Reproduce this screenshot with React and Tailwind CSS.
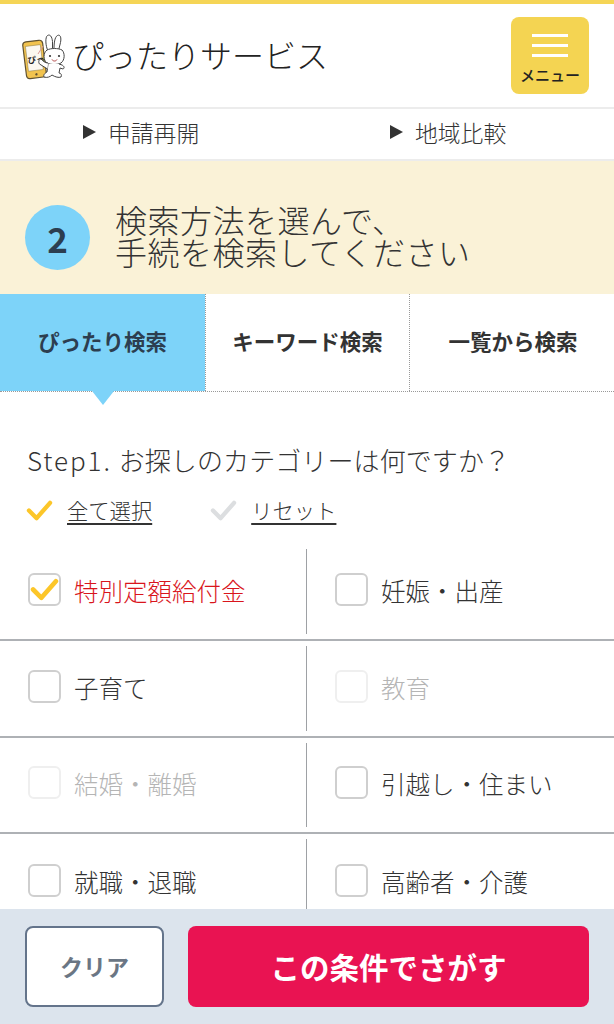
import React from 'react';

const font = { fontFamily: '"Noto Sans CJK JP", "Noto Sans", sans-serif' };

function Logo() {
  return (
    <svg width="44" height="48" viewBox="0 0 44 48" className="shrink-0">
      <g transform="rotate(-7 12 27)">
        <rect x="2.500" y="9" width="20" height="37" rx="3.500" fill="#f2c34e" stroke="#5f5130" strokeWidth="1.200" />
        <rect x="5" y="13.500" width="15" height="25" fill="#fbf8f0" stroke="#8a7a4a" strokeWidth="0.500" />
        <circle cx="12.500" cy="42.500" r="1.200" fill="#5f5130" />
      </g>
      <text x="5.500" y="31" fontSize="8.500" fontWeight="700" fill="#222222" transform="rotate(-7 12 27)">ぴっ</text>
      <path d="M16 22l5-8" stroke="#d99a9a" strokeWidth="1" />
      <path d="M26 19c-2.500-5-3-14-.5-15.500s4.500 1 5 6v8M32 17c0-5 .5-12 3.500-13.500s4 2.500 3 7l-2 8" fill="#fff" stroke="#444" strokeWidth="1" />
      <path d="M25 18c4-2 11-2 15 0 3 3 3 10-1 13-4 2-10 2-14 0-4-3-4-10 0-13z" fill="#fff" stroke="#444" strokeWidth="1" />
      <circle cx="28" cy="24" r="1.100" fill="#333" />
      <circle cx="37" cy="24" r="1.100" fill="#333" />
      <path d="M30 27.500c1 2 4 2 5 0" fill="none" stroke="#a33" strokeWidth="0.900" />
      <path d="M26 32l-1 8c-2 1-4 3-3 5 3 1 6 0 8-2 3 2 7 3 9 2 1-2 0-4-2-4l1-5 3 1c2-1 1-3-1-4l-3-1" fill="#fff" stroke="#444" strokeWidth="1" />
      <path d="M26 31c-3 0-5-2-7-4-2 0-3 3-1.500 5l8 5" fill="#fff" stroke="#444" strokeWidth="1" />
    </svg>
  );
}

function CheckMark({ color, className }) {
  return (
    <svg viewBox="0 0 28 24" className={className}>
      <path d="M3 12l8 8L25 4" fill="none" stroke={color} strokeWidth="4.500" strokeLinecap="round" strokeLinejoin="round" />
    </svg>
  );
}

function Cell({ label, checked, disabled, right }) {
  return (
    <div className={`h-full flex items-center ${right ? 'pl-[28px]' : 'pl-[28px]'}`}>
      <span className={`w-[33px] h-[33px] -mt-[5px] rounded-[6px] bg-white border-2 shrink-0 flex items-center justify-center ${disabled ? 'border-[#efefef]' : 'border-[#cfcfcf]'}`}>
        {checked && <CheckMark color="#fcc629" className="w-[29px] h-[25px] shrink-0" />}
      </span>
      <span className={`ml-[13px] -mt-[1px] text-[24.500px] leading-none font-light ${checked ? 'text-[#d9151c]' : disabled ? 'text-[#b5b5b5]' : 'text-[#333333]'}`}>{label}</span>
    </div>
  );
}

const rows = [
  [{ label: '特別定額給付金', checked: true }, { label: '妊娠・出産' }],
  [{ label: '子育て' }, { label: '教育', disabled: true }],
  [{ label: '結婚・離婚', disabled: true }, { label: '引越し・住まい' }],
  [{ label: '就職・退職' }, { label: '高齢者・介護' }],
];

export default function App() {
  return (
    <div style={font} className="relative w-[614px] h-[1024px] overflow-hidden bg-white text-[#333333]">
      <div className="h-[4px] bg-[#f5d556]" />

      <header className="h-[103px] flex items-center justify-between pl-[22px] pr-[25px]">
        <div className="flex items-center gap-[6px]">
          <Logo />
          <span className="-mt-[3px] text-[32px] leading-none font-light text-[#222222]">ぴったりサービス</span>
        </div>
        <div className="w-[78px] h-[77px] rounded-[8px] bg-[#f4d452] flex flex-col items-center pt-[17px]">
          <div className="w-[36px] flex flex-col gap-[7px]">
            <div className="h-[3px] bg-white" />
            <div className="h-[3px] bg-white" />
            <div className="h-[3px] bg-white" />
          </div>
          <span className="mt-[10px] text-[15px] leading-none font-medium text-[#222222]">メニュー</span>
        </div>
      </header>

      <nav className="h-[54px] border-y-2 border-[#ececec] grid grid-cols-2 items-center">
        <div className="flex items-center pl-[83px] -mt-[1px]">
          <span className="w-0 h-0 -mt-[2px] border-y-[7px] border-y-transparent border-l-[13px] border-l-[#333333]" />
          <span className="ml-[12px] text-[22.800px] leading-none font-light">申請再開</span>
        </div>
        <div className="flex items-center pl-[83px] -mt-[1px]">
          <span className="w-0 h-0 -mt-[2px] border-y-[7px] border-y-transparent border-l-[13px] border-l-[#333333]" />
          <span className="ml-[12px] text-[22.800px] leading-none font-light">地域比較</span>
        </div>
      </nav>

      <section className="h-[133px] bg-[#faf2d7] flex items-center pl-[25px] pt-[19px]">
        <div className="w-[65px] h-[65px] rounded-full bg-[#7dd3f9] flex items-center justify-center text-[35px] leading-none font-bold text-[#2c3e50]">2</div>
        <p className="ml-[25px] -mt-[5px] text-[32px] leading-[32px] font-light tracking-[0.5px] text-[#333333]">
          検索方法を選んで、<br />手続を検索してください
        </p>
      </section>

      <div className="grid grid-cols-[205px_204px_205px] h-[98px] border-b border-dotted border-[#999999]">
        <div className="relative bg-[#7dd3f9] flex items-center justify-center pb-[2px] text-[21.500px] font-bold text-[#2c3e50]">
          ぴったり検索
          <span className="absolute left-1/2 -translate-x-1/2 -bottom-[14px] w-0 h-0 border-x-[11px] border-x-transparent border-t-[14px] border-t-[#7dd3f9]" />
        </div>
        <div className="border-l border-dotted border-[#999999] flex items-center justify-center pb-[2px] text-[21.500px] font-bold">キーワード検索</div>
        <div className="border-l border-dotted border-[#999999] flex items-center justify-center pb-[2px] pl-[2px] text-[21.500px] font-bold">一覧から検索</div>
      </div>

      <h2 className="mt-[48px] pl-[27px] text-[26px] leading-[40px] font-light tracking-[0.1px] text-[#333333]">
        <span className="tracking-[1.900px] mr-[1px]">Step1.</span> お探しのカテゴリーは何ですか？
      </h2>

      <div className="mt-[10px] pl-[26px] h-[40px] flex items-center">
        <CheckMark color="#fcc629" className="w-[27px] h-[23px]" />
        <span className="ml-[14px] text-[21.300px] leading-[28px] font-light underline underline-offset-4">全て選択</span>
        <CheckMark color="#dcdee0" className="ml-[58px] w-[27px] h-[23px]" />
        <span className="ml-[14px] text-[21.300px] leading-[28px] font-light underline underline-offset-4">リセット</span>
      </div>

      <div className="mt-[14px]">
        {rows.map((row, i) => (
          <div key={i} className={`grid grid-cols-[306px_1fr] ${i === 2 ? 'h-[96px]' : 'h-[97px]'} ${i < 3 ? 'border-b-2 border-[#aeb1b5]' : ''}`}>
            <Cell {...row[0]} />
            <div className="border-l border-[#9ea1a5] my-[5px]">
              <Cell {...row[1]} right />
            </div>
          </div>
        ))}
      </div>

      <div className="absolute left-0 right-0 bottom-0 h-[115px] bg-[#dce4ed] flex items-start gap-[24px] px-[25px] pt-[17px]">
        <button className="w-[139px] h-[81px] rounded-[8px] bg-white border-2 border-[#64748b] text-[23px] font-bold text-[#6b7684]">クリア</button>
        <button className="flex-1 h-[81px] rounded-[8px] bg-[#e91352] text-[29.500px] font-bold text-white">この条件でさがす</button>
      </div>
    </div>
  );
}
